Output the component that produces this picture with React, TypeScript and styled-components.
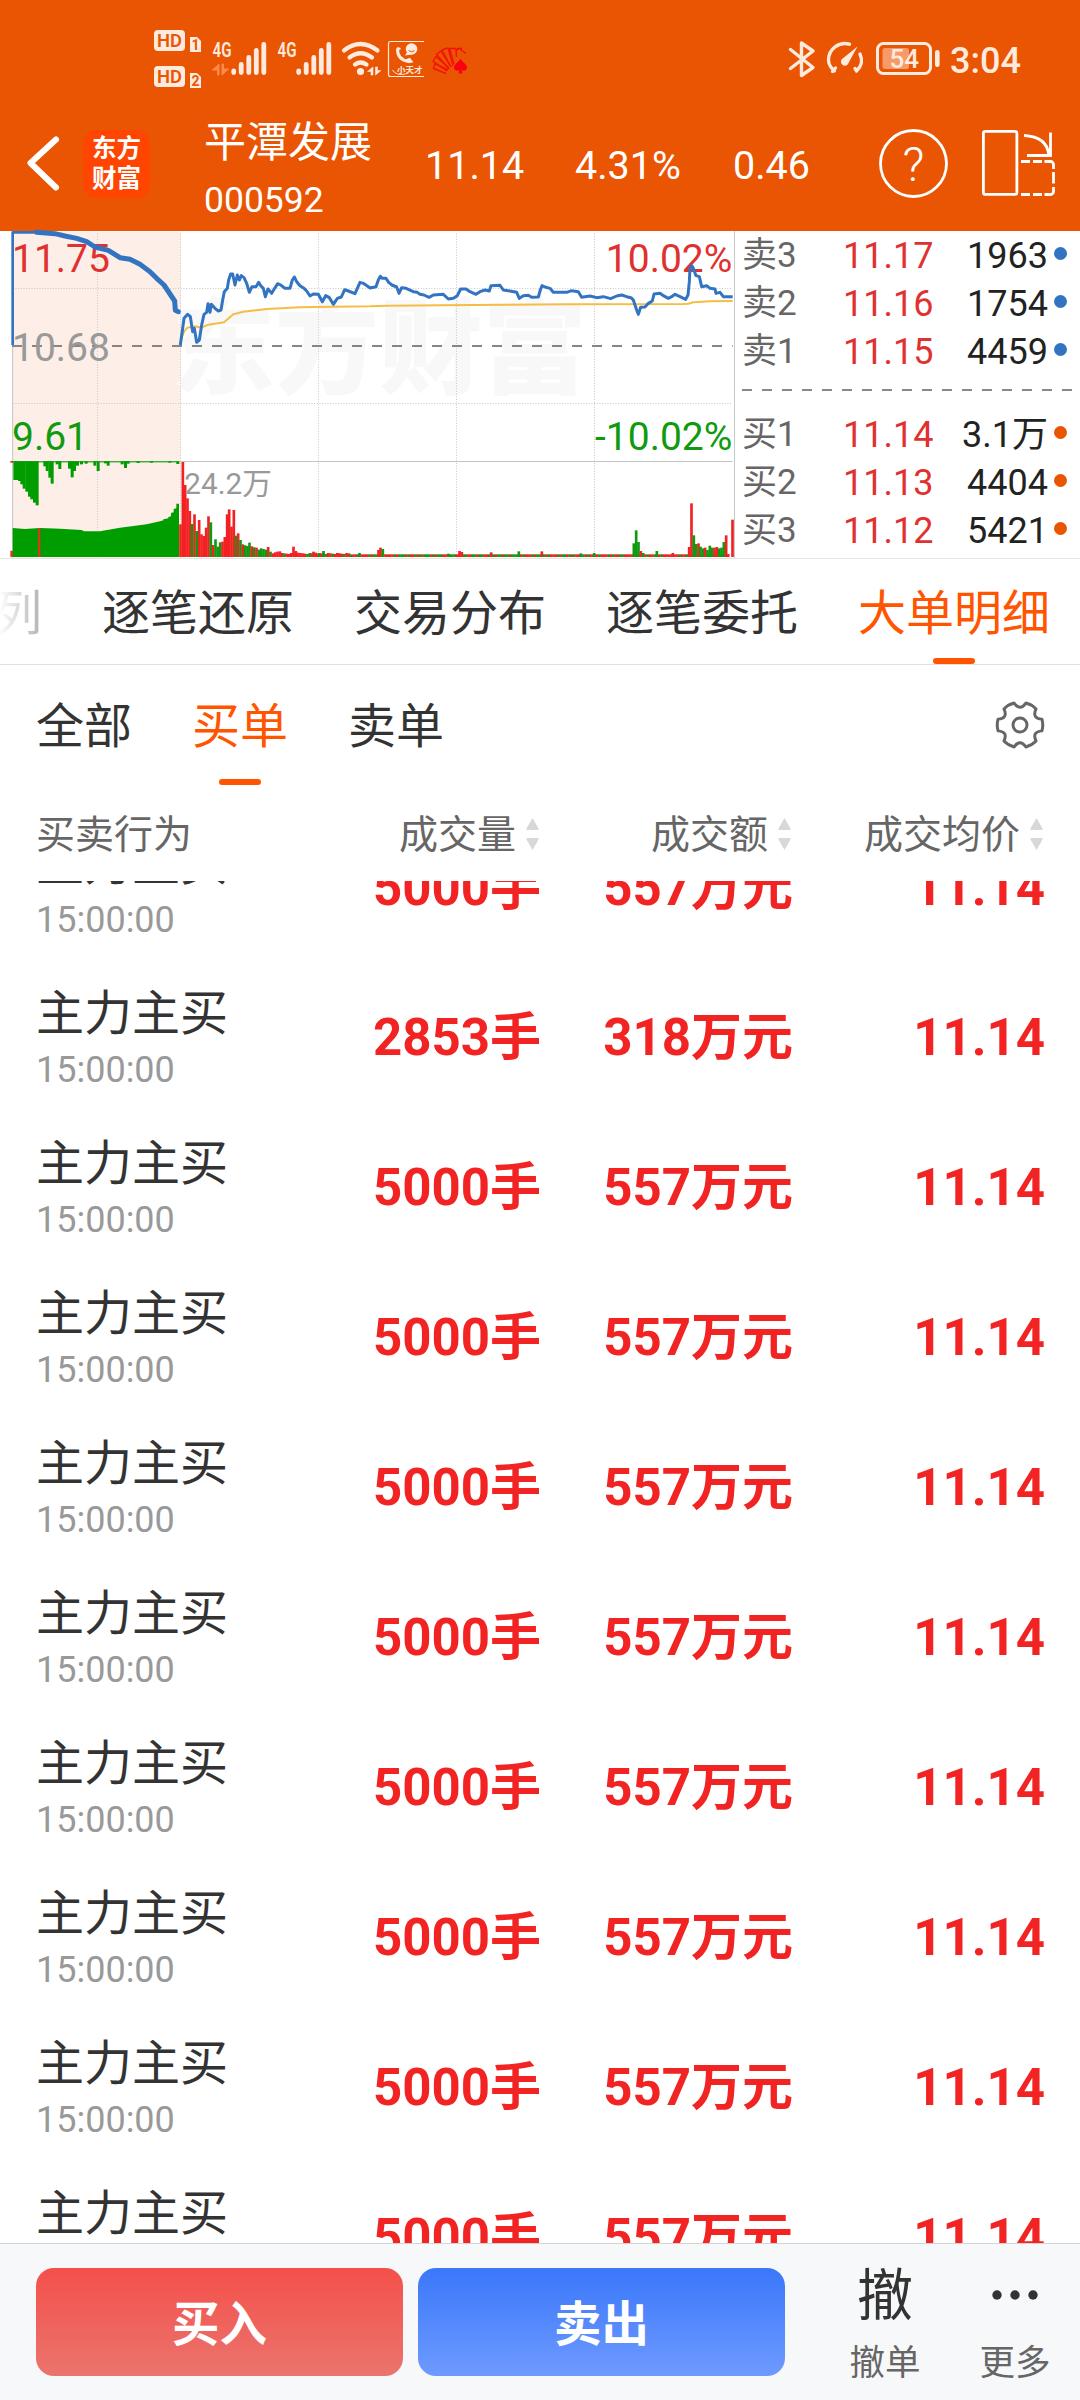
import React from "react";
import styled, { createGlobalStyle } from "styled-components";

const ORANGE = "#ea5504";
const ACCENT = "#ff5500";
const RED = "#e03131";
const GREEN = "#0f9a0f";
const BLUE = "#3274c2";
const CREAM = "#ffeade";
const FONT = `Roboto, "Noto Sans CJK SC", sans-serif`;

const GlobalStyle = createGlobalStyle`
  * { box-sizing: border-box; }
  body { margin: 0; background: #fff; font-family: ${FONT}; }
  svg { display: block; flex: none; overflow: visible; }
`;

const Screen = styled.div`
  width: 1080px;
  height: 2400px;
  display: flex;
  flex-direction: column;
  overflow: hidden;
  background: #fff;
  color: #333;
  white-space: nowrap;
`;

/* ---------- status bar ---------- */

const StatusBar = styled.div`
  height: 100px;
  flex: none;
  display: flex;
  justify-content: space-between;
  padding: 22px 0 0 154px;
  background: ${ORANGE};
`;

const StatusGroup = styled.div<{ $gap: number; $width?: number }>`
  display: flex;
  height: 74px;
  gap: ${(p) => p.$gap}px;
  ${(p) => p.$width && `width: ${p.$width}px;`}
`;

const Clock = styled.div`
  font-size: 36px;
  font-weight: 500;
  line-height: 42px;
  padding-top: 18px;
  color: ${CREAM};
`;

const HdBadges = () => (
  <svg width="48" height="74" viewBox="154 22 48 74">
    {[0, 36].map((dy, i) => (
      <g key={dy} transform={`translate(0 ${dy})`}>
        <rect x="154" y="30" width="31" height="21" rx="4" fill={CREAM} />
        <text x="169.500" y="47.400" fontSize="19" fontWeight="600" textAnchor="middle" fill={ORANGE} textLength="25" lengthAdjust="spacingAndGlyphs">HD</text>
        <path d="M190 37h7l4 4v11h-11z" fill={CREAM} />
        <text x="195.500" y="50" fontSize="14" fontWeight="700" textAnchor="middle" fill={ORANGE}>{i + 1}</text>
      </g>
    ))}
  </svg>
);

const Signal = ({ arrows }: { arrows?: boolean }) => (
  <svg width={arrows ? 54 : 52} height="74" viewBox={`213 22 ${arrows ? 54 : 52} 74`}>
    <text x="212.500" y="56.500" fontSize="21" fontWeight="600" fill={CREAM} textLength="19" lengthAdjust="spacingAndGlyphs">4G</text>
    {arrows && <path d="M219 64v11h-1.500v-5h-5zM222 75V64h1.500v5h5z" fill="#ff8a4a" stroke="#ff8a4a" strokeWidth="1" />}
    <g stroke={CREAM} strokeWidth="4.800" strokeLinecap="round">
      <path d="M233.700 71v1.500M241.200 64.500v8M248.800 57.500v15M256.300 50.500v22M263.800 44.500v28" />
    </g>
  </svg>
);

const Wifi = () => (
  <svg width="36" height="74" viewBox="341 22 36 74">
    <g fill="none" stroke={CREAM} strokeWidth="4.200" strokeLinecap="round">
      <path d="M344 50.500Q360.500 37.500 377.500 50.500" />
      <path d="M349.500 57.500Q360.500 49 372 57.500" />
      <path d="M355 64.500Q360.500 60.500 366.500 64.500" />
    </g>
    <circle cx="360.500" cy="71.500" r="3.600" fill={CREAM} />
    <path d="M373 67v8h-2v-3.500h-3.500zM375.500 75v-8h2v3.500h3.500z" fill={CREAM} stroke={CREAM} strokeWidth=".6" />
  </svg>
);

const WatchApp = () => (
  <svg width="33" height="74" viewBox="388 22 33 74">
    <path d="M424 41.500H390.500a2 2 0 0 0-2 2V74.500a2 2 0 0 0 2 2H424" fill="none" stroke={CREAM} strokeWidth="1.200" />
    <circle cx="411.500" cy="49" r="5.800" fill={CREAM} />
    <path d="M405 55.500l3-5 4 4z" fill={CREAM} />
    <path d="M408.500 50.500q3 2.500 6 .2" fill="none" stroke={ORANGE} strokeWidth="1" />
    <path d="M397.500 48.500Q397 59.500 408.500 61.500" fill="none" stroke={CREAM} strokeWidth="3" />
    <path d="M397 48l3.500 1M407 60l2.500-1 2 2.500-2.500.5z" stroke={CREAM} strokeWidth="2.200" fill={CREAM} />
    <text x="397" y="73" fontSize="8.500" fontWeight="700" fill={CREAM}>小天才</text>
    <path d="M392.500 70q3.500 6 13 4" fill="none" stroke={CREAM} strokeWidth="1" />
  </svg>
);

const CardFan = () => (
  <svg width="38" height="74" viewBox="432 22 38 74">
    <g fill="none" stroke="#f5120a" strokeWidth="1.400" strokeLinejoin="round">
      <path d="M446 73.500L433.500 68.500 435 63.500 448 70" />
      <path d="M447 71L433 61.500 436 56.500 449 68" />
      <path d="M449 69L436.500 54.500 441 51 451 67" />
      <path d="M451 67L442 50 448 47.800 453 66" />
      <path d="M454 64L449.500 48.500H456L456.500 57" />
      <path d="M456 51L459 48.300 466 53.500M457 48.500L462 48.500" />
    </g>
    <path d="M460.500 58.500c2 4 6.500 5.500 6.500 9a3.200 3.200 0 0 1-5.500 2.300l1 3.700h-4l1-3.700a3.200 3.200 0 0 1-5.500-2.300c0-3.500 4.500-5 6.500-9z" fill="#fb0012" />
  </svg>
);

const Bluetooth = () => (
  <svg width="28" height="74" viewBox="788 22 28 74">
    <path d="M790.500 49.500L813 67.500 801.500 75.500V43L813 51 790.500 68.500" fill="none" stroke={CREAM} strokeWidth="3.400" strokeLinejoin="round" strokeLinecap="round" />
  </svg>
);

const Gauge = () => (
  <svg width="40" height="74" viewBox="826 22 40 74">
    <g fill="none" stroke={CREAM} strokeWidth="3.300" strokeLinecap="round" strokeLinejoin="round">
      <path d="M832.500 71.500L835.500 68M834.500 71Q828.500 66 828.500 60A16.500 16.500 0 0 1 849.500 44.200" />
      <path d="M860 54Q864.500 63.500 856.500 71L855 68.500" />
    </g>
    <path d="M857.500 46.500L848.800 62.500a4 4 0 1 1-5.500-4.500z" fill={CREAM} />
  </svg>
);

const Battery = () => (
  <svg width="64" height="74" viewBox="876 22 64 74">
    <rect x="877.500" y="43.500" width="53" height="30" rx="6" fill="none" stroke={CREAM} strokeWidth="3" />
    <rect x="882.500" y="48" width="26.500" height="21" rx="2.500" fill="#f59a68" />
    <text x="904.300" y="67.800" fontSize="26" fontWeight="500" textAnchor="middle" fill={CREAM}>54</text>
    <rect x="935" y="50" width="4.600" height="17" rx="2.200" fill={CREAM} />
  </svg>
);

/* ---------- header ---------- */

const Header = styled.header`
  height: 131px;
  flex: none;
  display: grid;
  grid-template-columns: 83px 121px 221px 150px 158px 146px 1fr;
  background: ${ORANGE};
  color: #fff;
`;

const BackButton = styled.div`
  padding: 33px 0 0 24px;
`;

const BrandMark = styled.div`
  width: 67px;
  height: 68px;
  margin-top: 30px;
  padding-top: 2px;
  border-radius: 14px;
  background: #ff4500;
  font-family: "Noto Sans CJK SC", sans-serif;
  font-size: 24.500px;
  font-weight: 700;
  line-height: 30px;
  text-align: center;
`;

const StockTitle = styled.div`
  padding-top: 18px;
  font-size: 42px;
  line-height: 50px;
`;

const StockCode = styled.div`
  font-size: 35.500px;
  line-height: 42px;
  margin-top: 11px;
`;

const Quote = styled.div`
  padding-top: 43px;
  font-size: 39.500px;
  line-height: 46px;
`;

const HeaderIcons = styled.div`
  display: flex;
  gap: 32px;
  padding-top: 28px;
`;

/* ---------- market panel ---------- */

const Market = styled.section`
  height: 328px;
  flex: none;
  display: flex;
  border-bottom: 1px solid #e3e3e3;
`;

const Book = styled.div`
  flex: 1;
  margin-left: -1px;
  border-left: 1px solid #c8c8c8;
  padding: 1px 0 0 7px;
`;

const BookRow = styled.div`
  height: 48px;
  display: grid;
  grid-template-columns: 101px 93px 112px 1fr;
  align-items: center;
  font-size: 36px;
  line-height: 48px;
  color: #222;
`;

const BookLabel = styled.span`
  font-size: 35px;
  color: #666;
`;

const BookPrice = styled.span`
  color: ${RED};
`;

const BookVolume = styled.span`
  text-align: right;
`;

const Dot = styled.i<{ $sell: boolean }>`
  width: 13px;
  height: 13px;
  margin: -6px 0 0 6px;
  border-radius: 50%;
  background: ${(p) => (p.$sell ? BLUE : ORANGE)};
`;

const BookDivider = styled.div`
  height: 2px;
  margin: 13px 4px 20px 0;
  background: repeating-linear-gradient(90deg, #888 0 10px, transparent 10px 20px);
`;

const priceLine =
  "541,360 548,310 552,280 563,268 571,275 578,320 583,310 590,352 598,345 605,300 612,268 620,262 624,236 630,262 634,238 645,250 655,258 663,255 668,225 673,200 682,190 686,165 692,147 698,147 705,180 712,150 718,165 724,152 732,158 740,175 748,202 756,185 768,185 776,172 782,182 790,190 796,215 804,192 815,205 824,190 833,176 842,180 855,190 870,190 877,165 883,156 890,170 900,182 912,190 920,198 930,213 940,207 955,208 967,230 977,212 988,218 1000,238 1012,220 1024,216 1034,194 1045,198 1065,206 1072,190 1080,172 1090,175 1105,185 1110,189 1128,185 1135,165 1141,154 1147,160 1158,160 1166,172 1176,180 1190,186 1197,205 1205,188 1218,190 1240,200 1252,202 1260,208 1272,210 1287,217 1300,210 1330,208 1345,222 1360,220 1372,212 1382,192 1398,192 1410,200 1428,208 1440,200 1455,195 1468,198 1473,182 1500,181 1510,195 1530,198 1550,202 1558,220 1570,212 1585,211 1595,217 1615,216 1621,195 1626,182 1635,186 1650,190 1660,202 1680,202 1700,202 1715,197 1735,200 1745,217 1770,213 1790,218 1810,215 1832,221 1850,213 1865,210 1880,215 1893,218 1900,225 1905,240 1910,255 1915,268 1922,247 1935,246 1945,235 1957,228 1962,207 1980,205 1990,212 2005,220 2015,215 2025,208 2040,215 2057,223 2064,210 2068,170 2070,130 2075,122 2080,130 2088,152 2098,155 2105,185 2120,182 2130,190 2145,192 2148,205 2160,202 2170,215 2198,215";

const averageLine =
  "541,350 552,320 562,308 585,304 605,308 625,299 672,292 700,268 730,260 800,252 900,247 1000,245 1110,244 1160,242 1410,240 1710,238 2050,237 2065,236 2080,232 2130,229 2198,228";

const auctionLine =
  "110,22 165,26 195,33 230,40 260,50 285,66 325,76 360,98 390,103 420,118 450,140 470,160 492,180 512,210 524,228 526,256 535,260";

const auctionVolume =
  "38,996 38,909 75,912 120,909 180,911 245,915 252,919 300,919 360,908 440,898 480,889 490,886 490,883 505,880 505,876 513,874 513,864 521,862 521,852 529,850 529,836 537,836 537,996";

type Bar = [x: number, top: number, up: 0 | 1];

const openingBars: Bar[] = [
  [541, 898, 1], [548, 711, 1], [555, 780, 1], [562, 820, 1], [569, 858, 1], [576, 897, 0], [583, 868, 1],
  [590, 918, 0], [597, 885, 1], [604, 928, 1], [611, 933, 1], [618, 908, 1], [625, 874, 1], [632, 892, 0],
  [639, 960, 1], [646, 943, 0], [653, 965, 0], [660, 952, 0], [667, 950, 1], [674, 936, 1], [681, 868, 1],
  [687, 853, 1], [694, 905, 1], [701, 855, 1], [708, 932, 0], [714, 925, 1], [721, 945, 0], [728, 958, 1],
  [735, 961, 0], [742, 963, 0], [748, 953, 0], [755, 964, 1], [762, 967, 0], [769, 968, 1], [776, 974, 0],
  [783, 970, 0], [790, 972, 0], [797, 974, 0], [804, 966, 1], [811, 980, 0], [818, 985, 1], [825, 982, 1],
  [832, 980, 1], [839, 979, 1],
];

const spikes: Bar[] = [
  [873, 984, 1], [880, 965, 1], [887, 978, 1], [894, 983, 1], [940, 980, 1], [947, 983, 1], [970, 978, 0],
  [1012, 984, 1], [1078, 984, 0], [1135, 975, 1], [1141, 968, 1], [1148, 972, 0], [1345, 986, 0], [1378, 978, 1],
  [1385, 981, 1], [1473, 982, 1], [1556, 979, 0], [1625, 979, 1], [1742, 985, 0], [1782, 984, 0], [1901, 955, 0],
  [1908, 916, 0], [1915, 951, 0], [1922, 978, 1], [1929, 984, 0], [1970, 978, 0], [2018, 984, 1], [2067, 966, 1],
  [2074, 835, 1], [2081, 931, 0], [2088, 957, 0], [2095, 955, 1], [2101, 965, 0], [2108, 970, 0], [2115, 968, 1],
  [2122, 975, 0], [2129, 962, 0], [2136, 968, 0], [2143, 968, 1], [2150, 966, 1], [2157, 970, 0], [2164, 968, 0],
  [2171, 951, 0], [2178, 931, 1], [2184, 987, 1], [2197, 884, 1],
];

const BASE = 996;
const quietBars: Bar[] = Array.from({ length: 193 }, (_, i) => {
  const up = (i * 7 + ((i * i) % 11)) % 13 < 7 ? 1 : 0;
  return [846 + i * 6.9, i < 30 ? 984 + (i % 4) : 988, up] as Bar;
});

const hangingBars: [number, number][] = [
  [40, 765], [47, 765], [54, 768], [61, 778], [68, 791], [76, 800], [84, 815], [91, 823], [99, 833], [107, 841],
  [130, 724], [137, 738], [145, 758], [152, 776], [167, 718], [175, 732], [204, 731], [212, 757], [219, 738],
  [228, 722], [240, 718], [254, 716], [280, 722], [290, 738], [312, 715], [320, 722], [362, 718], [372, 729],
  [380, 716], [410, 714], [450, 713], [505, 713], [529, 717],
];

const Chart = () => (
  <svg width="735" height="328" viewBox="0 18 2205 984" fontFamily={FONT}>
    <rect x="38" y="20" width="505" height="978" fill="#fdeee7" />
    <text x="512" y="484" fontSize="312" fontWeight="900" fill="#f8f8f8" fontFamily='"Noto Sans CJK SC", sans-serif'>东方财富</text>
    <g stroke="#c9c9c9" strokeWidth="3" strokeDasharray="3 5" fill="none">
      <path d="M292.500 26V998M541.500 26V998M955.500 26V998M1369.500 26V998M1783.500 26V998M38 190.500H2198M38 535.500H2198" />
    </g>
    <path d="M38 360V998M38 709.500H2198" stroke="#c4c4c4" strokeWidth="3" />
    <path d="M36 363H2198" stroke="#858585" strokeWidth="6" strokeDasharray="30 30" />
    <g fontSize="117">
      <text x="36" y="141" fill={RED}>11.75</text>
      <text x="36" y="407" fill="#999">10.68</text>
      <text x="36" y="674" fill={GREEN}>9.61</text>
      <g textAnchor="end">
        <text x="2197" y="141" fill={RED}>10.02%</text>
        <text x="2197" y="674" fill={GREEN}>-10.02%</text>
      </g>
    </g>
    <g fill="none" strokeLinejoin="round">
      <polyline points={averageLine} stroke="#f5bd45" strokeWidth="6" />
      <path d="M38 360V22H115" stroke={BLUE} strokeWidth="8" />
      <polyline points={auctionLine} stroke={BLUE} strokeWidth="15" strokeLinecap="round" />
      <polyline points={priceLine} stroke={BLUE} strokeWidth="9" />
    </g>
    <g fill="#009d00">
      <rect x="38" y="709" width="498" height="3" />
      {hangingBars.map(([x, bottom]) => (
        <rect key={x} x={x} y="709" width="9" height={bottom - 709} />
      ))}
      <polygon points={auctionVolume} />
    </g>
    <path d="M114 910h7v86h-7zM31 977h8v19h-8zM31 708h8v5h-8z" fill="#d23a22" />
    {[...quietBars, ...openingBars, ...spikes].map(([x, top, up], i) => (
      <rect key={i} x={x - 3.5} y={top} width="8" height={BASE - top} fill={up ? "#f22222" : "#129912"} />
    ))}
    <text x="553" y="806" fontSize="89" fill="#999">24.2万</text>
  </svg>
);

/* ---------- tabs ---------- */

const Tabs = styled.nav`
  height: 106px;
  flex: none;
  display: flex;
  gap: 60px;
  padding-top: 26px;
  margin-left: -6px;
  border-bottom: 1px solid #e0e0e0;
  overflow: hidden;
`;

const Tab = styled.div<{ $active?: boolean; $faded?: boolean }>`
  flex: none;
  display: flex;
  flex-direction: column;
  align-items: center;
  justify-content: space-between;
  height: 79px;
  font-size: 48px;
  line-height: 58px;
  color: ${(p) => (p.$active ? ACCENT : "#333")};
  ${(p) => p.$faded && "background: linear-gradient(90deg, #fff 10%, #b5b5b5 95%); background-clip: text; color: transparent;"}
`;

const Underline = styled.i`
  width: 42px;
  height: 6px;
  border-radius: 3px;
  background: ${ACCENT};
`;

const FilterBar = styled.div`
  height: 120px;
  flex: none;
  display: flex;
  gap: 60px;
  padding: 33px 33px 0 36px;
`;

const FilterTab = styled(Tab)`
  height: 87px;
`;

const GearSlot = styled.div`
  margin-left: auto;
`;

const gearPath = (() => {
  const at = (r: number, deg: number) => {
    const a = (deg * Math.PI) / 180;
    return `${(27 + r * Math.cos(a)).toFixed(2)} ${(27 + r * Math.sin(a)).toFixed(2)}`;
  };
  let d = `M${at(22.7, -15)}`;
  for (let k = 0; k < 6; k++) {
    const c = k * 60;
    d += `Q${at(23.6, c)} ${at(22.7, c + 15)}Q${at(13.5, c + 30)} ${at(22.7, c + 45)}`;
  }
  return d + "Z";
})();

/* ---------- table ---------- */

const columns = `
  display: grid;
  grid-template-columns: 300px 1fr 252px 252px;
  padding: 0 37px 0 36px;
`;

const TableHead = styled.div`
  ${columns}
  height: 96px;
  flex: none;
  padding-top: 27px;
  font-size: 39px;
  line-height: 46px;
  color: #666;
`;

const HeadCell = styled.div`
  display: flex;
  justify-content: flex-end;
  gap: 10px;
`;

const Sorter = () => (
  <svg width="13" height="46" viewBox="0 1 13 46">
    <path d="M6.500 7L12.500 17.500V19H.5V17.500zM6.500 39L12.500 28.500V27H.5V28.500z" fill="#d8d8d8" />
  </svg>
);

const List = styled.div`
  flex: 1;
  min-height: 0;
  overflow: hidden;
`;

const Rows = styled.div`
  margin-top: -69px;
`;

const Row = styled.div`
  ${columns}
  height: 150px;
`;

const Action = styled.div`
  padding-top: 24px;
  font-size: 48px;
  line-height: 56px;
`;

const Time = styled.div`
  margin-top: 7px;
  font-size: 36px;
  line-height: 42px;
  color: #999;
`;

const Figure = styled.div`
  margin-right: -2px;
  padding-top: 46px;
  font-size: 51px;
  font-weight: 700;
  line-height: 60px;
  text-align: right;
  color: #f12323;
`;

/* ---------- trade bar ---------- */

const TradeBar = styled.footer`
  height: 157px;
  flex: none;
  display: flex;
  padding: 24px 0 0 36px;
  border-top: 1px solid #d4d4d4;
  background: #f7f8fa;
`;

const TradeButton = styled.button<{ $from: string; $to: string }>`
  width: 367px;
  height: 108px;
  margin: 0 15px 0 0;
  padding: 0 0 4px;
  border: 0;
  border-radius: 18px;
  background: linear-gradient(${(p) => p.$from}, ${(p) => p.$to});
  color: #fff;
  font: 700 47.500px ${FONT};
`;

const Tools = styled.div`
  display: flex;
  padding: 1px 0 0 20px;
`;

const Tool = styled.div`
  width: 130px;
  display: flex;
  flex-direction: column;
  align-items: center;
  font-size: 35.500px;
  line-height: 42px;
  color: #666;
`;

const ToolGlyph = styled.div`
  height: 73px;
  font-size: 56px;
  line-height: 54px;
  color: #333;
`;

const sells = [["卖3", "11.17", "1963"], ["卖2", "11.16", "1754"], ["卖1", "11.15", "4459"]];
const buys = [["买1", "11.14", "3.1万"], ["买2", "11.13", "4404"], ["买3", "11.12", "5421"]];
const orders = Array.from({ length: 10 }, (_, i) => (i === 1 ? ["2853手", "318万元"] : ["5000手", "557万元"]));

const BookRows = ({ rows, sell }: { rows: string[][]; sell: boolean }) => (
  <>
    {rows.map(([label, price, volume]) => (
      <BookRow key={label}>
        <BookLabel>{label}</BookLabel>
        <BookPrice>{price}</BookPrice>
        <BookVolume>{volume}</BookVolume>
        <Dot $sell={sell} />
      </BookRow>
    ))}
  </>
);

export default function App() {
  return (
    <Screen>
      <GlobalStyle />
      <StatusBar>
        <StatusGroup $gap={11}>
          <HdBadges />
          <Signal arrows />
          <Signal />
          <Wifi />
          <WatchApp />
          <CardFan />
        </StatusGroup>
        <StatusGroup $gap={10} $width={292}>
          <Bluetooth />
          <Gauge />
          <Battery />
          <Clock>3:04</Clock>
        </StatusGroup>
      </StatusBar>

      <Header>
        <BackButton>
          <svg width="38" height="60" viewBox="0 0 38 60">
            <path d="M32 6.500L6.500 30 32 54.500" fill="none" stroke="#fff" strokeWidth="6" strokeLinecap="round" strokeLinejoin="round" />
          </svg>
        </BackButton>
        <BrandMark>东方<br />财富</BrandMark>
        <StockTitle>
          平潭发展
          <StockCode>000592</StockCode>
        </StockTitle>
        <Quote>11.14</Quote>
        <Quote>4.31%</Quote>
        <Quote>0.46</Quote>
        <HeaderIcons>
          <svg width="70" height="70" viewBox="0 0 70 70">
            <circle cx="34.500" cy="35.500" r="33" fill="none" stroke="#fff" strokeWidth="2.800" />
            <text x="34.500" y="52.500" fontSize="48" fontWeight="300" textAnchor="middle" fill="#fff">?</text>
          </svg>
          <svg width="74" height="70" viewBox="981 128 74 70" fill="none" stroke="#fff" strokeWidth="2.800">
            <rect x="983.400" y="131.400" width="33.500" height="63" rx="2" />
            <path d="M1024 135.500Q1047 137 1048.500 154M1050.500 132.500V155.500H1027" />
            <path d="M1021 161.500h9M1033 161.500h9M1044.500 161.500h6a3 3 0 0 1 3 3v4.500M1053.500 172v11.500M1053.500 187v4.500a3 3 0 0 1-3 3h-6M1042 194.500h-9M1030 194.500h-9" />
          </svg>
        </HeaderIcons>
      </Header>

      <Market>
        <Chart />
        <Book>
          <BookRows rows={sells} sell />
          <BookDivider />
          <BookRows rows={buys} sell={false} />
        </Book>
      </Market>

      <Tabs>
        <Tab $faded>列</Tab>
        <Tab>逐笔还原</Tab>
        <Tab>交易分布</Tab>
        <Tab>逐笔委托</Tab>
        <Tab $active>大单明细<Underline /></Tab>
      </Tabs>

      <FilterBar>
        <FilterTab>全部</FilterTab>
        <FilterTab $active>买单<Underline /></FilterTab>
        <FilterTab>卖单</FilterTab>
        <GearSlot>
          <svg width="54" height="54" viewBox="0 0 54 54" fill="none" stroke="#666" strokeWidth="3" strokeLinejoin="round">
            <path d={gearPath} />
            <circle cx="27" cy="27" r="7" />
          </svg>
        </GearSlot>
      </FilterBar>

      <TableHead>
        <div>买卖行为</div>
        <HeadCell>成交量<Sorter /></HeadCell>
        <HeadCell>成交额<Sorter /></HeadCell>
        <HeadCell>成交均价<Sorter /></HeadCell>
      </TableHead>

      <List>
        <Rows>
          {orders.map(([volume, amount], i) => (
            <Row key={i}>
              <div>
                <Action>主力主买</Action>
                <Time>15:00:00</Time>
              </div>
              <Figure>{volume}</Figure>
              <Figure>{amount}</Figure>
              <Figure>11.14</Figure>
            </Row>
          ))}
        </Rows>
      </List>

      <TradeBar>
        <TradeButton $from="#f4504a" $to="#eb746e">买入</TradeButton>
        <TradeButton $from="#3a77fa" $to="#6e9aff">卖出</TradeButton>
        <Tools>
          <Tool>
            <ToolGlyph>撤</ToolGlyph>
            撤单
          </Tool>
          <Tool>
            <ToolGlyph>
              <svg width="48" height="54" viewBox="0 1 48 54" fill="#333">
                <circle cx="6" cy="27" r="4.700" />
                <circle cx="24" cy="27" r="4.700" />
                <circle cx="42" cy="27" r="4.700" />
              </svg>
            </ToolGlyph>
            更多
          </Tool>
        </Tools>
      </TradeBar>
    </Screen>
  );
}
